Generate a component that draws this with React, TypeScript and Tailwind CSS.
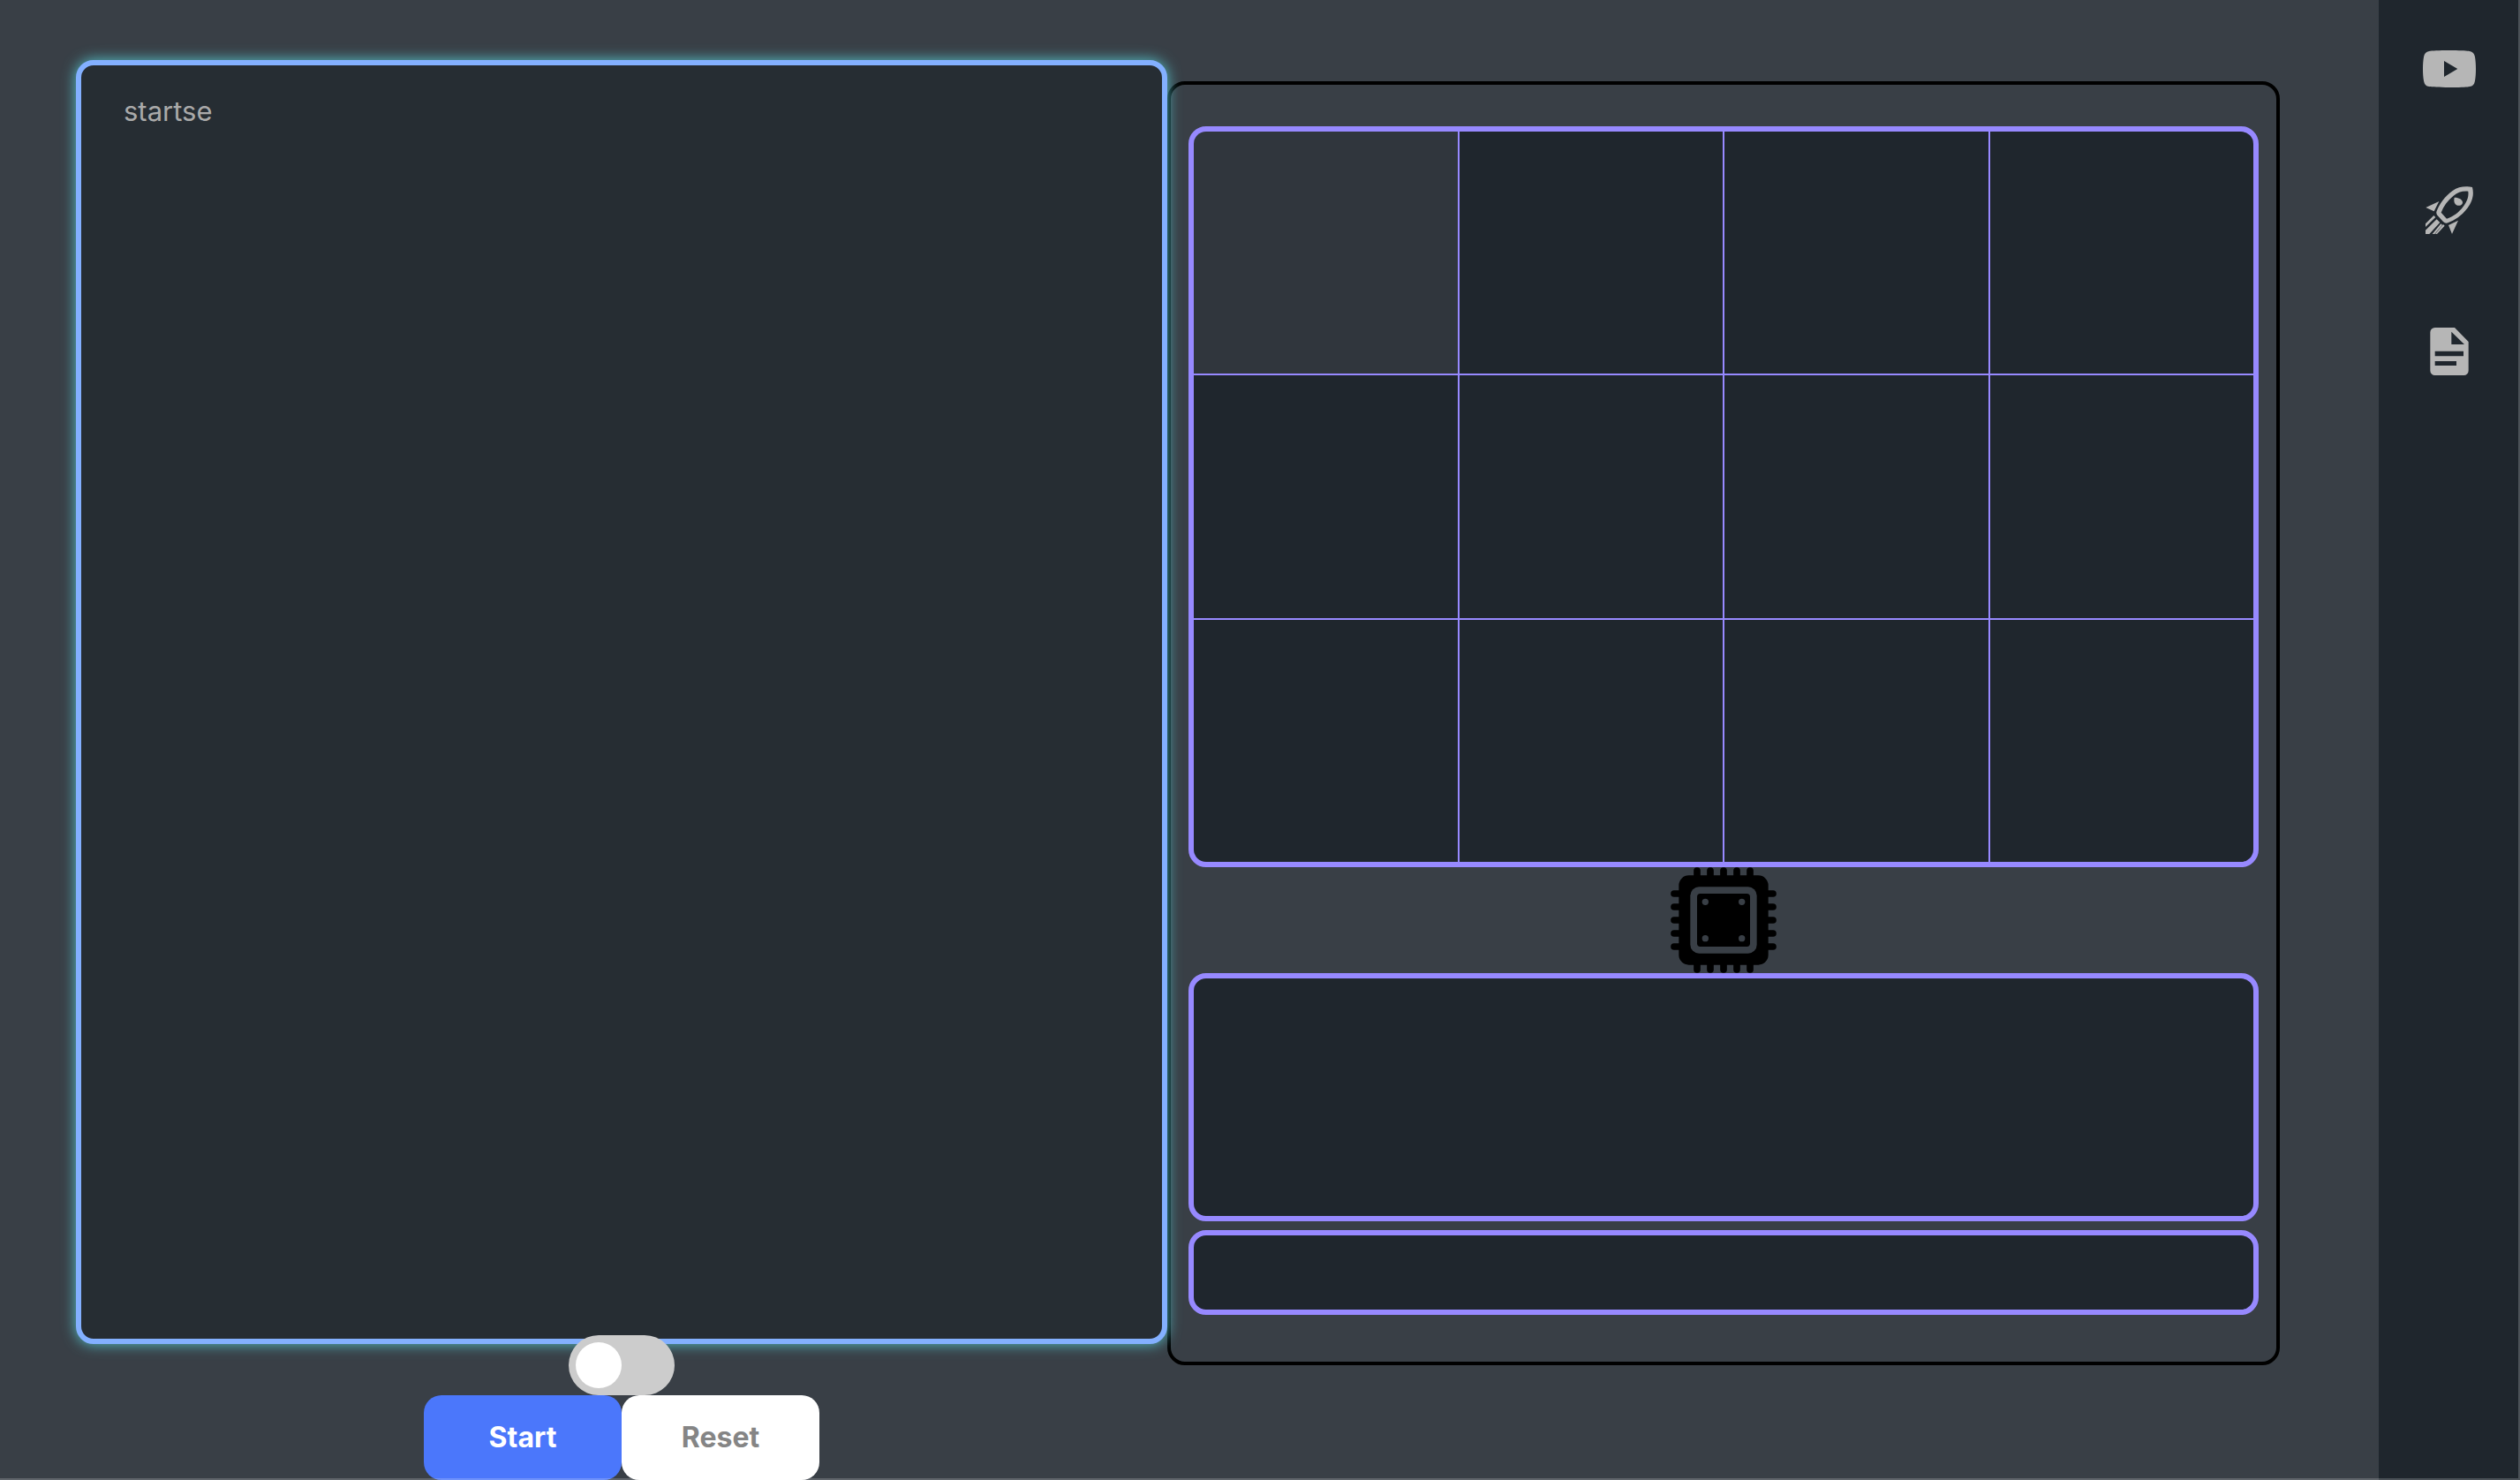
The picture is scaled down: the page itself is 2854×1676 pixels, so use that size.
import { useState } from "react";

const cells = Array.from({ length: 12 }, (_, i) => i);
const pins = [90, 135, 180, 225, 270];

function VideoIcon() {
  return (
    <svg viewBox="-2 -11 64 64" fill="currentColor" fillRule="evenodd" className="size-16" aria-hidden="true">
      <path d="M30 0C18 0 10 .5 7 .9 3.6 1.4 1.8 3.4 1.1 7 .3 11 0 16 0 21s.3 10 1.1 14c.7 3.6 2.5 5.6 5.9 6.1 3 .4 11 .9 23 .9s20-.5 23-.9c3.400-.5 5.200-2.500 5.900-6.100C59.700 31 60 26 60 21s-.3-10-1.100-14C58.200 3.400 56.400 1.400 53 .9 50 .5 42 0 30 0ZM24 12v18l15.300-9Z" />
    </svg>
  );
}

function RocketIcon() {
  return (
    <svg viewBox="-15 -15 192 192" fill="currentColor" fillRule="evenodd" className="size-16" aria-hidden="true">
      <path d="M159 3C138-2 112 0 92 15 65 34 47 61 38 84Q35 91 40 98L60 120Q67 127 76 124C99 116 123 100 141 76 161 50 165 26 159 3ZM145 17C126 15 108 21 95 32 75 48 61 67 53 89L72 110C94 103 113 89 128 69 143 49 147 33 145 17Z" />
      <path d="M98 38C110 37 127 44 126 56 124 68 105 69 99 57 96 51 97 44 98 38Z" />
      <path d="M46 51 1 72l28 13ZM111 116 78 132l12 30Z" />
      <path d="M28 99 34 105 0 138V127ZM38 112 49 123 13 162H0V149ZM52 127 57 131 31 162H23ZM60 129 65 134 39 162H33Z" />
    </svg>
  );
}

function DocumentIcon() {
  return (
    <svg viewBox="-31 -15 192 192" fill="currentColor" fillRule="evenodd" className="size-16" aria-hidden="true">
      <path d="M16 0H83L130 48V146A16 16 0 0 1 114 162H16A16 16 0 0 1 0 146V16A16 16 0 0 1 16 0ZM72 14V57H116ZM16 80V97H113V80ZM16 114V129H89V114Z" />
    </svg>
  );
}

function ChipIcon() {
  return (
    <svg viewBox="0 0 360 360" className="size-[120px] self-center" aria-hidden="true">
      <g stroke="#000" strokeWidth="23" strokeLinecap="round">
        {pins.map((p) => (
          <g key={p}>
            <line x1={p} y1="12" x2={p} y2="348" />
            <line x1="12" y1={p} x2="348" y2={p} />
          </g>
        ))}
      </g>
      <rect x="28" y="28" width="304" height="304" rx="34" />
      <rect x="67" y="67" width="226" height="226" rx="30" fill="#393f46" />
      <rect x="90" y="90" width="180" height="180" rx="11" />
      <g fill="#393f46">
        <circle cx="118" cy="118" r="11" />
        <circle cx="242" cy="118" r="11" />
        <circle cx="118" cy="242" r="11" />
        <circle cx="242" cy="242" r="11" />
      </g>
    </svg>
  );
}

export default function App() {
  const [code, setCode] = useState("");
  return (
    <div className="relative flex h-screen bg-[#393f46] font-['Inter',sans-serif] text-[32px]">
      <main className="grid flex-1 grid-cols-[1236fr_1260fr] items-start pr-28 pl-[86px]">
        <section className="relative z-10 flex flex-col items-center pt-[68px]">
          <textarea
            aria-label="Code"
            placeholder="startse"
            value={code}
            onChange={(e) => setCode(e.target.value)}
            className="block h-[1454px] w-full resize-none rounded-[20px] border-6 border-[#83b0ff] bg-[#262d33] px-12 py-8 text-[31px] leading-10 text-[#aaaaaa] shadow-[0_0_16px_#55c3cb] outline-none placeholder:text-[#aaaaaa]"
          />
          <label className="relative -mt-2.5 h-[68px] w-[120px] cursor-pointer">
            <input type="checkbox" aria-label="Toggle mode" className="peer sr-only" />
            <span className="block h-full w-full rounded-full bg-[#cccccc] p-2 peer-checked:bg-[#4b77fb]">
              <span className="block size-[52px] rounded-full bg-white" />
            </span>
          </label>
          <div className="flex font-bold">
            <button type="button" className="h-24 w-56 rounded-[20px] bg-[#4b77fb] text-white">
              Start
            </button>
            <button type="button" className="h-24 w-56 rounded-[20px] bg-white text-[#858585]">
              Reset
            </button>
          </div>
        </section>
        <section className="mt-[92px] flex h-[1454px] flex-col rounded-[20px] border-4 border-black px-5 pt-[47px]">
          <div className="grid h-[839px] grid-cols-4 grid-rows-3 gap-0.5 overflow-hidden rounded-[20px] border-6 border-[#9789ff] bg-[#9789ff]">
            {cells.map((i) => (
              <div key={i} className={i === 0 ? "bg-[#30363d]" : "bg-[#1f262d]"} />
            ))}
          </div>
          <ChipIcon />
          <div className="h-[281px] rounded-[20px] border-6 border-[#9789ff] bg-[#1f262d]" />
          <div className="mt-2.5 h-24 rounded-[20px] border-6 border-[#9789ff] bg-[#1f262d]" />
        </section>
      </main>
      <nav className="flex w-40 flex-col items-center gap-24 bg-[#1f262d] pt-[46px] text-[#b6b6b6]">
        <a href="#video" aria-label="Video">
          <VideoIcon />
        </a>
        <a href="#launch" aria-label="Launch">
          <RocketIcon />
        </a>
        <a href="#docs" aria-label="Docs">
          <DocumentIcon />
        </a>
      </nav>
      <div className="pointer-events-none absolute inset-0 z-20 border-r-2 border-b-2 border-white/20" />
    </div>
  );
}
